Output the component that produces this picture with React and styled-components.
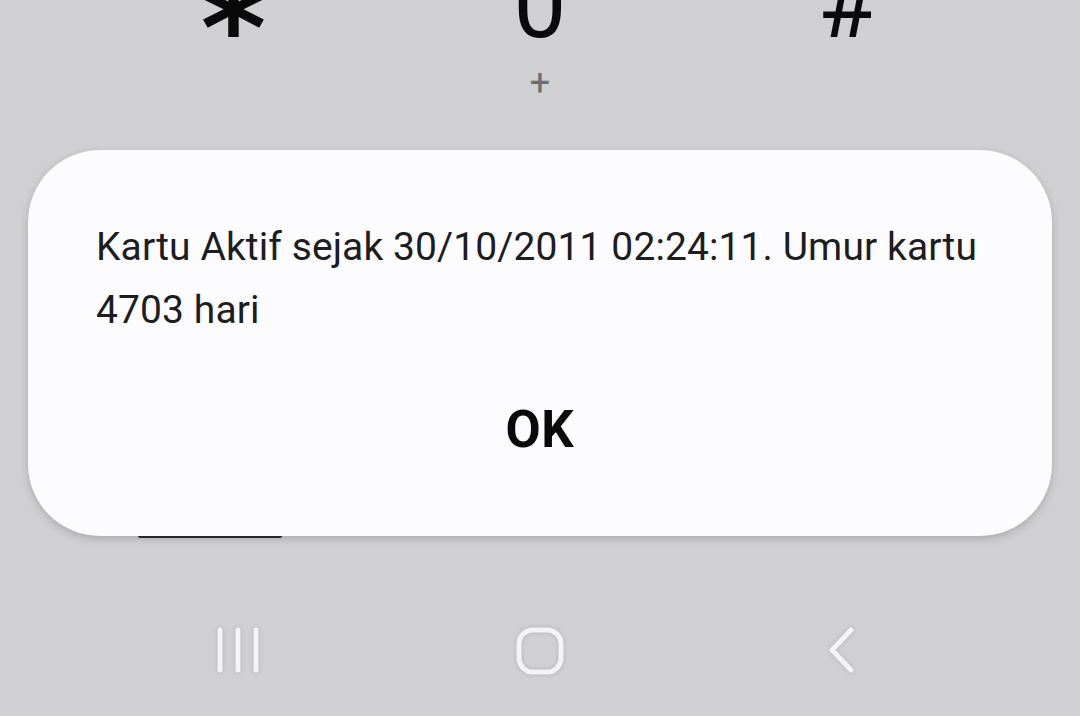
import React from "react";
import styled, { createGlobalStyle } from "styled-components";

const Global = createGlobalStyle`
  html, body { margin: 0; padding: 0; background: #d0d0d2; }
  body { font-family: Roboto, "Noto Sans", sans-serif; }
  #root { width: 1080px; height: 716px; overflow: hidden; }
`;

const Screen = styled.div`
  width: 1080px;
  height: 716px;
  background: #d0d0d2;
  display: flex;
  flex-direction: column;
  overflow: hidden;
  position: relative;
`;

const KeyRow = styled.div`
  display: grid;
  grid-template-columns: 1fr 1fr 1fr;
  width: 920px;
  margin: -43px auto 0;
  height: 193px;
`;

const Key = styled.div`
  display: flex;
  flex-direction: column;
  align-items: center;
  color: #0a0a0a;
  font-size: 94px;
  font-weight: 400;
  line-height: 96px;
  height: 96px;
`;

const StarGlyph = styled.span`
  font-family: "DejaVu Sans", sans-serif;
  font-size: 120px;
  line-height: 96px;
  transform: translateY(24px) scaleX(1.05);
  font-weight: 700;
`;

const KeySub = styled.span`
  font-size: 36px;
  line-height: 30px;
  color: #6d6d6f;
  margin-top: 15px;
`;

const Content = styled.div`
  position: relative;
  flex: 1;
  display: flex;
  flex-direction: column;
`;

const BehindBar = styled.div`
  position: absolute;
  left: 138px;
  top: 384px;
  width: 144px;
  height: 4px;
  border-radius: 2px;
  background: #2a2a2c;
`;

const Dialog = styled.div`
  position: relative;
  margin: 0 28px;
  height: 386px;
  background: #fcfcfe;
  border-radius: 72px;
  box-shadow: 0 3px 8px rgba(0, 0, 0, 0.18);
  display: flex;
  flex-direction: column;
  padding: 0 60px 0 68px;
`;

const Message = styled.p`
  margin: 66px 0 0;
  font-size: 39px;
  line-height: 63px;
  color: #1d1d1f;
  letter-spacing: 0.1px;
`;

const OkButton = styled.div`
  margin-top: 60px;
  align-self: center;
  font-size: 51px;
  font-weight: 700;
  color: #0a0a0a;
  line-height: 56px;
  letter-spacing: 0.8px;
  transform: translateX(-4px);
`;

const NavBar = styled.div`
  position: absolute;
  left: 0;
  right: 0;
  bottom: 44px;
  height: 46px;
  display: grid;
  grid-template-columns: 1fr 1fr 1fr;
  padding: 0 80px;
  align-items: center;
`;

const NavItem = styled.div`
  display: flex;
  justify-content: ${(p) => p.$align};
  filter: drop-shadow(0 0 2px rgba(0,0,0,0.15));
`;

export default function App() {
  return (
    <>
      <Global />
      <Screen>
        <KeyRow>
          <Key><StarGlyph>*</StarGlyph></Key>
          <Key>0<KeySub>+</KeySub></Key>
          <Key>#</Key>
        </KeyRow>
        <Content>
          <BehindBar />
          <Dialog>
            <Message>
              Kartu Aktif sejak 30/10/2011 02:24:11. Umur kartu 4703 hari
            </Message>
            <OkButton>OK</OkButton>
          </Dialog>
        </Content>
        <NavBar>
          <NavItem $align="flex-start">
            <svg width="60" height="50" viewBox="0 0 60 50" style={{ marginLeft: 132 }}>
              <g stroke="#f4f4f6" strokeWidth="5" strokeLinecap="round">
                <line x1="8" y1="4" x2="8" y2="44" />
                <line x1="26" y1="4" x2="26" y2="44" />
                <line x1="44" y1="4" x2="44" y2="44" />
              </g>
            </svg>
          </NavItem>
          <NavItem $align="center">
            <svg width="50" height="50" viewBox="0 0 50 50">
              <rect x="4" y="4" width="42" height="42" rx="14" fill="none" stroke="#f4f4f6" strokeWidth="5" />
            </svg>
          </NavItem>
          <NavItem $align="flex-end">
            <svg width="40" height="50" viewBox="0 0 40 50" style={{ marginRight: 136 }}>
              <polyline points="27,4 8,24 27,44" fill="none" stroke="#f4f4f6" strokeWidth="5" strokeLinecap="round" strokeLinejoin="round" />
            </svg>
          </NavItem>
        </NavBar>
      </Screen>
    </>
  );
}
